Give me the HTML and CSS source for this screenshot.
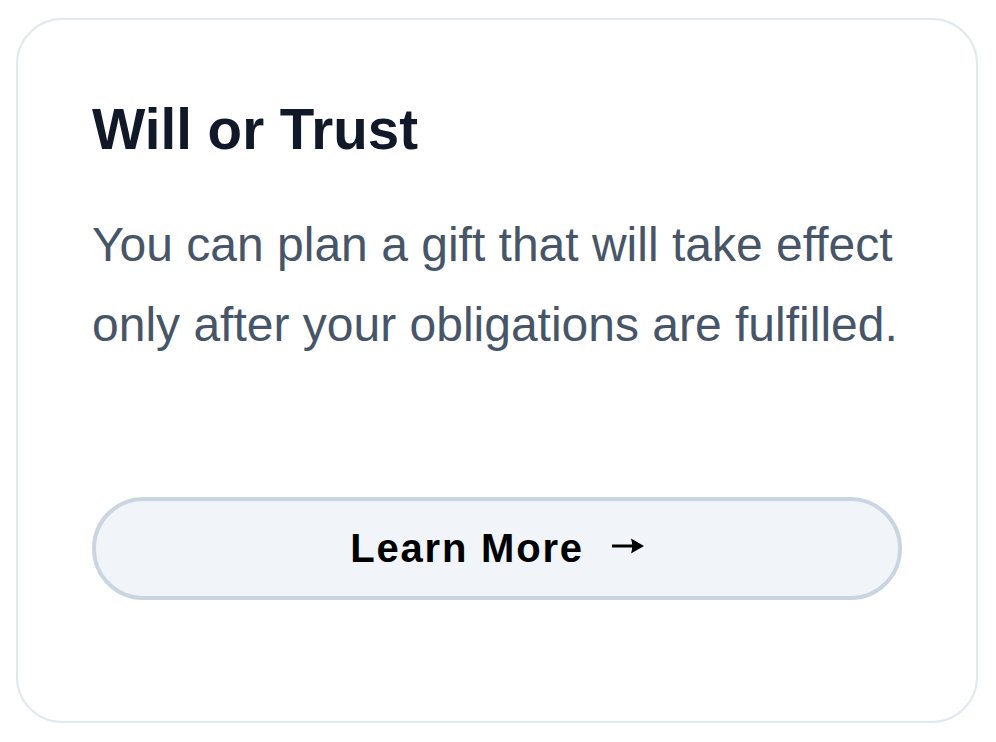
FILE: index.html
```html
<!DOCTYPE html>
<html lang="en">
<head>
<meta charset="utf-8">
<title>Will or Trust</title>
<link rel="stylesheet" href="styles.css">
</head>
<body>
  <div class="card">
    <h2 class="card-title">Will or Trust</h2>
    <p class="card-text">You can plan a gift that will take effect only after your obligations are fulfilled.</p>
    <a class="card-button" href="#">
      <span class="btn-label">Learn More</span>
      <svg class="btn-arrow" width="32" height="20" viewBox="0 0 32 20" aria-hidden="true">
        <path d="M0 10H22" stroke="#000" stroke-width="3"/>
        <path d="M19 2.5L32 10L19 17.5Q21.5 10 19 2.5Z" fill="#000"/>
      </svg>
    </a>
  </div>
</body>
</html>
```

FILE: styles.css
```css
html, body {
  margin: 0;
  padding: 0;
  background: #ffffff;
}

body {
  padding: 18px 18px 19px 16px;
  font-family: "Liberation Sans", Arial, Helvetica, sans-serif;
}

.card {
  box-sizing: border-box;
  width: 962px;
  height: 705px;
  border: 2px solid #e2e8f0;
  border-radius: 46px;
  padding: 76px 74px 0 74px;
  display: flex;
  flex-direction: column;
  background: #ffffff;
}

.card-title {
  margin: 0;
  font-size: 56.5px;
  line-height: 67px;
  font-weight: 700;
  color: #111827;
}

.card-text {
  margin: 42px 0 0 0;
  font-size: 48px;
  line-height: 80px;
  color: #475569;
}

.card-button {
  box-sizing: border-box;
  margin-top: 132px;
  height: 103px;
  border: 4px solid #cbd5e1;
  border-radius: 999px;
  background: #f1f5f9;
  display: flex;
  align-items: center;
  justify-content: center;
  gap: 28px;
  text-decoration: none;
  color: #000000;
}

.btn-label {
  font-size: 40px;
  font-weight: 700;
  letter-spacing: 1.8px;
}

.btn-arrow {
  display: block;
  margin-top: -6px;
}
```
